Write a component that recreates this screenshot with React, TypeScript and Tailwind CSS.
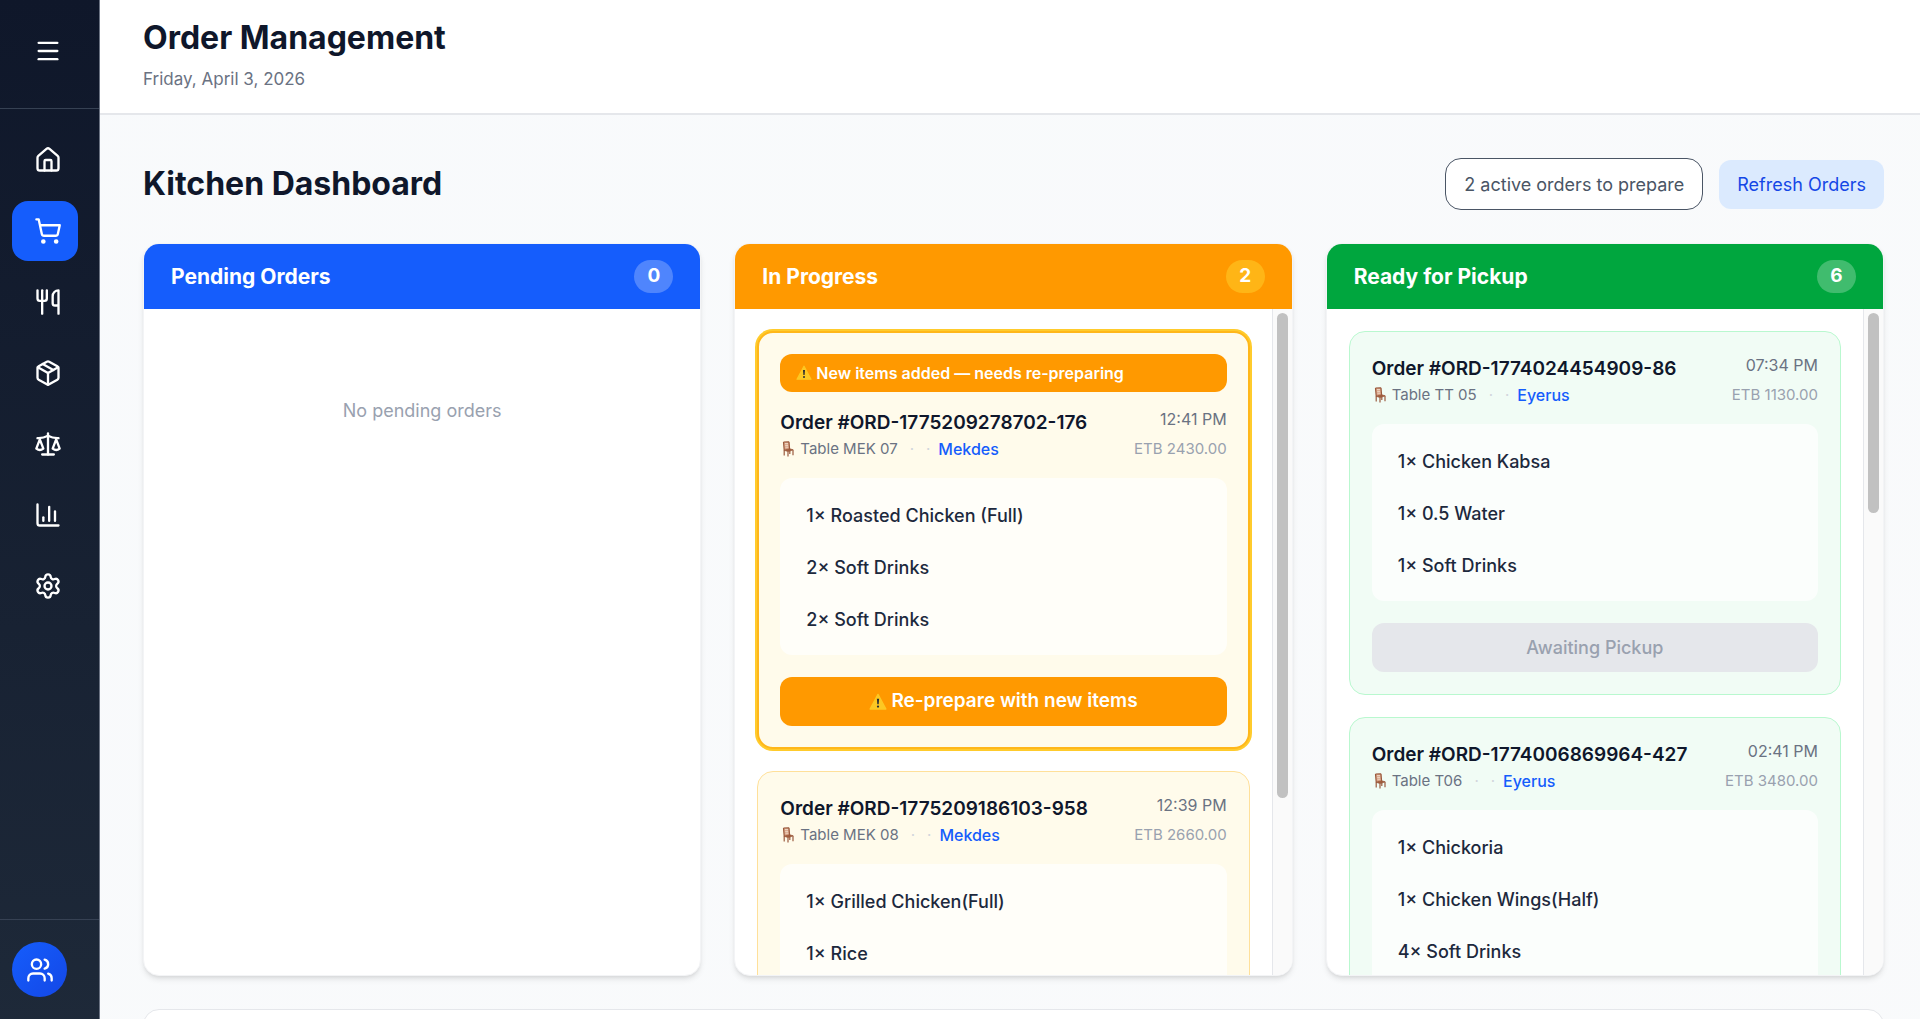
import {
  ChartColumn,
  House,
  Menu,
  Package,
  Scale,
  Settings,
  ShoppingCart,
  Users,
  Utensils,
} from "lucide-react";

type Tone = "amber" | "green";

interface Order {
  id: string;
  table: string;
  waiter: string;
  time: string;
  total: string;
  items: string[];
  isUpdated?: boolean;
  isAwaiting?: boolean;
}

const NAV_ITEMS = [
  { label: "Home", icon: House, active: false },
  { label: "Orders", icon: ShoppingCart, active: true },
  { label: "Menu", icon: Utensils, active: false },
  { label: "Inventory", icon: Package, active: false },
  { label: "Balance", icon: Scale, active: false },
  { label: "Reports", icon: ChartColumn, active: false },
  { label: "Settings", icon: Settings, active: false },
];

const IN_PROGRESS: Order[] = [
  {
    id: "ORD-1775209278702-176",
    table: "Table MEK 07",
    waiter: "Mekdes",
    time: "12:41 PM",
    total: "ETB 2430.00",
    items: ["1× Roasted Chicken (Full)", "2× Soft Drinks", "2× Soft Drinks"],
    isUpdated: true,
  },
  {
    id: "ORD-1775209186103-958",
    table: "Table MEK 08",
    waiter: "Mekdes",
    time: "12:39 PM",
    total: "ETB 2660.00",
    items: ["1× Grilled Chicken(Full)", "1× Rice"],
  },
];

const READY: Order[] = [
  {
    id: "ORD-1774024454909-86",
    table: "Table TT 05",
    waiter: "Eyerus",
    time: "07:34 PM",
    total: "ETB 1130.00",
    items: ["1× Chicken Kabsa", "1× 0.5 Water", "1× Soft Drinks"],
    isAwaiting: true,
  },
  {
    id: "ORD-1774006869964-427",
    table: "Table T06",
    waiter: "Eyerus",
    time: "02:41 PM",
    total: "ETB 3480.00",
    items: ["1× Chickoria", "1× Chicken Wings(Half)", "4× Soft Drinks"],
  },
];

const WarningIcon = ({ className }: { className: string }) => (
  <svg viewBox="0 0 16 16" className={className} aria-hidden="true">
    <path
      d="M8 1.2 15 14.2H1Z"
      fill="#fdc823"
      stroke="#fdc823"
      strokeWidth="1.2"
      strokeLinejoin="round"
    />
    <path d="M7 5h2l-.4 5H7.4Z" fill="#2b2f33" />
    <circle cx="8" cy="12" r="1" fill="#2b2f33" />
  </svg>
);

const ChairIcon = () => (
  <svg viewBox="0 0 12 16" className="h-4 w-3" fill="none" aria-hidden="true">
    <path d="M1.5 1 7 .8l.6 7.6-5.4.8Z" fill="#d9a488" />
    <path d="M3 2.6h3M3.2 4.4h3M3.4 6.2h3" stroke="#f3e2d2" strokeWidth=".8" />
    <path d="m1.5 1 .7 8.2M7 .8l.6 7.6M1.5 1 7 .8" stroke="#9a5a3e" strokeWidth="1.2" />
    <path d="m2 9.2 5.6-1.4 3.6 1-5 1.8Z" fill="#a35c3c" stroke="#9a5a3e" strokeWidth=".8" />
    <path d="M2.2 9v5.6M6 10.5v5M11 9v5.2M7.8 9v4" stroke="#9a5a3e" strokeWidth="1.2" />
  </svg>
);

const Sidebar = () => (
  <aside className="flex w-[100px] shrink-0 flex-col border-r border-gray-500 bg-linear-to-b from-[#0f172a] to-gray-800 text-white">
    <div className="flex h-[109px] shrink-0 border-b border-gray-700 pt-[37px] pl-[34px]">
      <button type="button" aria-label="Toggle menu" className="h-7 w-7">
        <Menu size={28} />
      </button>
    </div>
    <nav className="flex flex-1 flex-col gap-[11px] px-3 pt-[21px]">
      {NAV_ITEMS.map(({ label, icon: Icon, active }) => (
        <a
          key={label}
          href="#"
          aria-label={label}
          className={
            active
              ? "flex h-[60px] w-[66px] items-center rounded-2xl bg-[#155dfc] pl-[22px]"
              : "flex h-[60px] w-[66px] items-center rounded-2xl pl-[22px]"
          }
        >
          <Icon size={28} />
        </a>
      ))}
    </nav>
    <div className="h-[100px] shrink-0 border-t border-gray-700 px-3 pt-[22px]">
      <button
        type="button"
        aria-label="Profile"
        className="flex h-[55px] w-[55px] items-center justify-center rounded-full bg-linear-to-br from-[#155dfc] to-[#1447e6]"
      >
        <Users size={28} />
      </button>
    </div>
  </aside>
);

const OrderCard = ({ order, tone }: { order: Order; tone: Tone }) => {
  const toneClass =
    tone === "green"
      ? "border border-green-200 bg-[#f1fcf5] p-[22px]"
      : order.isUpdated
        ? "border-2 border-[#ffb71a] bg-[#fffbeb] p-[21px] ring-2 ring-[#ffcb2c]"
        : "border border-[#ffe09a] bg-[#fffbeb] p-[22px]";

  return (
    <article className={`shrink-0 rounded-2xl ${toneClass}`}>
      {order.isUpdated && (
        <div className="mb-4 flex h-[38px] items-center gap-1 rounded-xl bg-[#ff9900] px-4 text-[16px] font-semibold text-white">
          <WarningIcon className="h-4 w-4" />
          New items added — needs re-preparing
        </div>
      )}
      <div className="mb-[18px] flex justify-between">
        <div>
          <h3 className="text-[19px] leading-[30px] font-semibold text-slate-900">
            Order #{order.id}
          </h3>
          <div className="flex items-center text-[15px] leading-[22px] text-gray-500">
            <span className="flex items-center gap-1.5 pl-0.5">
              <ChairIcon />
              {order.table}
            </span>
            <span className="ml-3 text-gray-300">·</span>
            <span className="ml-3 text-gray-300">·</span>
            <a href="#" className="ml-2 text-[16px] font-medium text-[#155dfc]">
              {order.waiter}
            </a>
          </div>
        </div>
        <div className="text-right leading-[22px]">
          <p className="text-[16px] text-gray-500">{order.time}</p>
          <p className="mt-2 text-[15px] text-gray-400">{order.total}</p>
        </div>
      </div>
      <ul className="flex flex-col gap-2 rounded-xl bg-white/70 px-3.5 pt-[15px] pb-3.5">
        {order.items.map((item, i) => (
          <li
            key={i}
            className="flex h-11 items-center px-3 text-[18px] font-medium text-slate-800"
          >
            {item}
          </li>
        ))}
      </ul>
      {order.isAwaiting && (
        <button
          type="button"
          disabled
          className="mt-[22px] h-[49px] w-full rounded-xl bg-gray-200 text-[18px] font-medium text-gray-400"
        >
          Awaiting Pickup
        </button>
      )}
      {order.isUpdated && (
        <button
          type="button"
          className="mt-[22px] flex h-[49px] w-full items-center justify-center gap-1 rounded-xl bg-[#ff9900] text-[19px] font-semibold text-white"
        >
          <WarningIcon className="h-[18px] w-[18px]" />
          Re-prepare with new items
        </button>
      )}
    </article>
  );
};

interface ColumnProps {
  title: string;
  count: number;
  headerClass: string;
  badgeClass: string;
  tone?: Tone;
  orders?: Order[];
  thumbClass?: string;
}

const Column = ({
  title,
  count,
  headerClass,
  badgeClass,
  tone = "amber",
  orders = [],
  thumbClass = "",
}: ColumnProps) => (
  <section className="flex h-[733px] flex-col overflow-hidden rounded-2xl border border-gray-100 bg-white shadow-md">
    <header
      className={`flex h-[65px] shrink-0 items-center justify-between px-[27px] text-white ${headerClass}`}
    >
      <h2 className="text-[21px] font-bold">{title}</h2>
      <span
        className={`flex h-[33px] w-[39px] items-center justify-center rounded-full text-[19px] font-bold ${badgeClass}`}
      >
        {count}
      </span>
    </header>
    {orders.length === 0 ? (
      <p className="pt-[88px] text-center text-[18px] text-gray-400">
        No pending orders
      </p>
    ) : (
      <div className="flex min-h-0 flex-1">
        <div className="flex flex-1 flex-col gap-[22px] overflow-hidden p-[22px]">
          {orders.map((order) => (
            <OrderCard key={order.id} order={order} tone={tone} />
          ))}
        </div>
        <div className="w-5 border-l border-gray-200 bg-[#fafafa] pt-1 pl-1">
          <div className={`w-[11px] rounded-full bg-[#c1c1c1] ${thumbClass}`} />
        </div>
      </div>
    )}
  </section>
);

/**
 * KitchenPage - kitchen view of the order management section
 */
const KitchenPage = () => {
  return (
    <div className="flex h-screen overflow-hidden bg-linear-to-br from-slate-50 to-gray-50 font-[Inter,sans-serif] text-slate-900">
      <Sidebar />
      <div className="flex min-w-0 flex-1 flex-col">
        <header className="h-[115px] shrink-0 border-b-2 border-gray-200 bg-white pt-[18px] pl-[43px]">
          <h1 className="text-[32px] leading-10 font-bold">Order Management</h1>
          <p className="mt-[7px] text-[17px] leading-7 text-gray-500">
            Friday, April 3, 2026
          </p>
        </header>

        <main className="min-h-0 flex-1 overflow-hidden pt-[43px] pr-9 pl-[43px]">
          <div className="flex h-[52px] items-center justify-between">
            <h2 className="text-[32px] leading-10 font-bold">
              Kitchen Dashboard
            </h2>
            <div className="flex items-center gap-4">
              <span className="flex h-[52px] items-center rounded-2xl border border-gray-600 bg-white px-[18px] text-[18px] text-gray-600">
                2 active orders to prepare
              </span>
              <button
                type="button"
                className="h-[49px] rounded-xl bg-blue-100 px-[18px] text-[18px] text-blue-700"
              >
                Refresh Orders
              </button>
            </div>
          </div>

          <div className="mt-[33px] grid grid-cols-3 gap-[33px]">
            <Column
              title="Pending Orders"
              count={0}
              headerClass="bg-[#155dfc]"
              badgeClass="bg-white/25"
            />
            <Column
              title="In Progress"
              count={2}
              headerClass="bg-[#ff9900]"
              badgeClass="bg-[#ffb516]"
              orders={IN_PROGRESS}
              thumbClass="h-[485px]"
            />
            <Column
              title="Ready for Pickup"
              count={6}
              headerClass="bg-[#00a63e]"
              badgeClass="bg-white/25"
              tone="green"
              orders={READY}
              thumbClass="h-[200px]"
            />
          </div>

          <div className="mt-[33px] h-40 rounded-2xl border border-gray-200 bg-white" />
        </main>
      </div>
    </div>
  );
};

export default KitchenPage;
